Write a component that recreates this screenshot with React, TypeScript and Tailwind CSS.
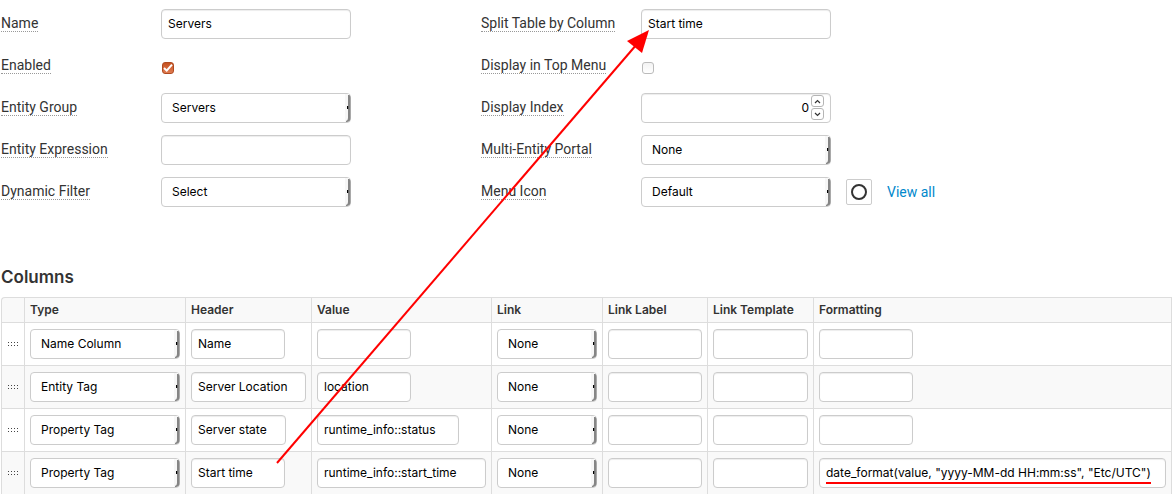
import { useRef, useState } from "react";
import type { ReactNode } from "react";

const FIELD =
  "block h-[30px] rounded border border-[#ccc] bg-white pb-0.5 text-xs text-black shadow-[inset_0_1px_1px_rgba(0,0,0,0.075)] outline-none focus:border-[#66afe9]";

function Picker({ id, label, value, options = [] }: { id: string; label?: string; value: string; options?: string[] }) {
  const [current, setCurrent] = useState(value);
  return (
    <div className="relative w-full">
      <select
        id={id}
        aria-label={label}
        value={current}
        onChange={(e) => setCurrent(e.target.value)}
        className="block h-[30px] w-full appearance-none rounded border border-[#ccc] bg-white pr-3 pl-2.5 text-xs text-black outline-none"
      >
        {[value, ...options].map((o) => (
          <option key={o}>{o}</option>
        ))}
      </select>
      <svg className="pointer-events-none absolute top-0 right-0" width="6" height="30" viewBox="0 0 6 30" aria-hidden="true">
        <path d="M0 1h4v28H0z" fill="#f7f7f7" />
        <path d="M3 2h1.5q1 1 1 3v20q0 4-4 4H1v-1q2-.6 2-3z" fill="#858585" />
        <path d="M2 13h1.2v3H2z" fill="#000" />
      </svg>
    </div>
  );
}

function TextField({ id, label, value = "", className = "w-full" }: { id: string; label?: string; value?: string; className?: string }) {
  return <input id={id} aria-label={label} type="text" defaultValue={value} className={`${FIELD} ${className} px-1.5`} />;
}

function Tick({ id, checked = false }: { id: string; checked?: boolean }) {
  return (
    <span className="relative mt-1 ml-px block size-3">
      <input
        id={id}
        type="checkbox"
        defaultChecked={checked}
        className="peer block size-3 appearance-none rounded-[3px] border border-[#bbb] bg-linear-to-b from-[#f3f3f3] to-white checked:border-[#b04a20] checked:from-[#c5521f] checked:to-[#e07b50]"
      />
      <svg className="pointer-events-none absolute inset-0 hidden peer-checked:block" width="12" height="12" viewBox="0 0 12 12" aria-hidden="true">
        <path d="M2 6 4.7 8.6 10 2.6" fill="none" stroke="#fff" strokeWidth="2" />
      </svg>
    </span>
  );
}

function IndexField({ id }: { id: string }) {
  const ref = useRef<HTMLInputElement>(null);
  const button = "flex h-3 w-[13px] items-center justify-center rounded-[3px] border border-[#b5b5b5] bg-white";
  return (
    <div className="relative w-full">
      <input
        id={id}
        ref={ref}
        type="number"
        defaultValue={0}
        className={`${FIELD} w-full pr-[21px] pl-1.5 text-right [appearance:textfield] [&::-webkit-inner-spin-button]:appearance-none`}
      />
      <div className="absolute top-0.5 right-[7px] flex flex-col gap-px">
        <button type="button" aria-label="Increase" className={button} onClick={() => ref.current?.stepUp()}>
          <svg width="7" height="5" viewBox="0 0 7 5" fill="none" stroke="#333" strokeWidth="1.2">
            <path d="M1 4l2.5-2.5L6 4" />
          </svg>
        </button>
        <button type="button" aria-label="Decrease" className={button} onClick={() => ref.current?.stepDown()}>
          <svg width="7" height="5" viewBox="0 0 7 5" fill="none" stroke="#333" strokeWidth="1.2">
            <path d="M1 1l2.5 2.5L6 1" />
          </svg>
        </button>
      </div>
    </div>
  );
}

function Row({ id, label, children, extra }: { id: string; label: string; children: ReactNode; extra?: ReactNode }) {
  return (
    <div className="flex h-[30px] items-center">
      <div className="flex w-40 shrink-0">
        <label
          htmlFor={id}
          className="border-b border-dotted border-[#999] font-['Roboto',sans-serif] text-sm leading-[15px] whitespace-nowrap"
        >
          {label}
        </label>
      </div>
      <div className="w-[190px] shrink-0">{children}</div>
      {extra}
    </div>
  );
}

function Grip() {
  return (
    <svg className="ml-[5px]" width="12" height="6" viewBox="0 0 12 6" fill="#444" aria-hidden="true">
      {[1, 4, 7, 10].map((x) => (
        <path key={x} d={`M${x} 1h1v1h-1zM${x} 4h1v1h-1z`} />
      ))}
    </svg>
  );
}

const HEADS = ["", "Type", "Header", "Value", "Link", "Link Label", "Link Template", "Formatting"];

const SMALL = "w-[94px]";

const ROWS = [
  { type: "Name Column", header: "Name", headerW: SMALL, value: "", valueW: SMALL, format: "" },
  { type: "Entity Tag", header: "Server Location", headerW: "w-[115px]", value: "location", valueW: SMALL, format: "" },
  { type: "Property Tag", header: "Server state", headerW: "w-[95px]", value: "runtime_info::status", valueW: "w-[142px]", format: "" },
  {
    type: "Property Tag",
    header: "Start time",
    headerW: SMALL,
    value: "runtime_info::start_time",
    valueW: "w-[169px]",
    format: 'date_format(value, "yyyy-MM-dd HH:mm:ss", "Etc/UTC")',
  },
];

const CELL = "border-t border-l border-[#ddd]";
const FIELD_CELL = "border-t border-l border-[#ddd] px-[5px] py-1.5";

export default function App() {
  return (
    <main className="relative bg-white pt-[9px] pr-0.5 pl-px font-['Inter',sans-serif] text-[#333]">
      <form className="flex flex-wrap gap-x-[130px] gap-y-3">
        <div className="flex flex-col gap-3">
          <Row id="name" label="Name">
            <TextField id="name" value="Servers" />
          </Row>
          <Row id="enabled" label="Enabled">
            <Tick id="enabled" checked />
          </Row>
          <Row id="group" label="Entity Group">
            <Picker id="group" value="Servers" />
          </Row>
          <Row id="expression" label="Entity Expression">
            <TextField id="expression" />
          </Row>
          <Row id="filter" label="Dynamic Filter">
            <Picker id="filter" value="Select" />
          </Row>
        </div>
        <div className="flex flex-col gap-3">
          <Row id="split" label="Split Table by Column">
            <TextField id="split" value="Start time" />
          </Row>
          <Row id="top" label="Display in Top Menu">
            <Tick id="top" />
          </Row>
          <Row id="index" label="Display Index">
            <IndexField id="index" />
          </Row>
          <Row id="portal" label="Multi-Entity Portal">
            <Picker id="portal" value="None" />
          </Row>
          <Row
            id="icon"
            label="Menu Icon"
            extra={
              <>
                <span className="ml-[15px] flex size-[26px] shrink-0 items-center justify-center rounded-xs border border-[#ccc]">
                  <svg width="18" height="18" viewBox="0 0 18 18" fill="none" stroke="#333" strokeWidth="2" aria-hidden="true">
                    <circle cx="9" cy="9" r="7" />
                  </svg>
                </span>
                <a href="#icons" className="ml-[15px] font-['Roboto',sans-serif] text-sm whitespace-nowrap text-[#0088cc]">
                  View all
                </a>
              </>
            }
          >
            <Picker id="icon" value="Default" />
          </Row>
        </div>
      </form>

      <h2 className="mt-[58px] mb-2 text-[17px] leading-6 font-semibold">Columns</h2>

      <table className="w-full table-fixed border-separate border-spacing-0 rounded-tl border-r border-[#ddd] text-xs">
        <colgroup>
          <col className="w-[23px]" />
          <col className="w-[161px]" />
          <col className="w-[126px]" />
          <col className="w-[180px]" />
          <col className="w-[111px]" />
          <col className="w-[105px]" />
          <col className="w-[106px]" />
          <col />
        </colgroup>
        <thead>
          <tr className="h-[25px] bg-[#f9f9f9]">
            {HEADS.map((h) => (
              <th key={h} scope="col" className={`${CELL} px-[5px] py-0 text-left leading-6 font-semibold whitespace-nowrap first:rounded-tl`}>
                {h}
              </th>
            ))}
          </tr>
        </thead>
        <tbody>
          {ROWS.map((r, i) => (
            <tr key={i} className="even:bg-[#f9f9f9]">
              <td className={CELL}>
                <Grip />
              </td>
              <td className={FIELD_CELL}>
                <Picker id={`type-${i}`} label="Type" value={r.type} />
              </td>
              <td className={FIELD_CELL}>
                <TextField id={`header-${i}`} label="Header" value={r.header} className={r.headerW} />
              </td>
              <td className={FIELD_CELL}>
                <TextField id={`value-${i}`} label="Value" value={r.value} className={r.valueW} />
              </td>
              <td className={FIELD_CELL}>
                <Picker id={`link-${i}`} label="Link" value="None" />
              </td>
              <td className={FIELD_CELL}>
                <TextField id={`label-${i}`} label="Link Label" className={SMALL} />
              </td>
              <td className={FIELD_CELL}>
                <TextField id={`template-${i}`} label="Link Template" />
              </td>
              <td className={FIELD_CELL}>
                <TextField id={`format-${i}`} label="Formatting" value={r.format} className={r.format ? "w-full" : SMALL} />
              </td>
            </tr>
          ))}
        </tbody>
      </table>

      <svg className="pointer-events-none absolute top-0 left-0" width="1174" height="494" viewBox="0 0 1174 494" aria-hidden="true">
        <path d="M277 463 637 44" stroke="#f00" strokeWidth="2" />
        <path d="M649 30 627 41 642 53z" fill="#f00" />
        <path d="M826 483h325" stroke="#f00" strokeWidth="2" />
      </svg>
    </main>
  );
}
